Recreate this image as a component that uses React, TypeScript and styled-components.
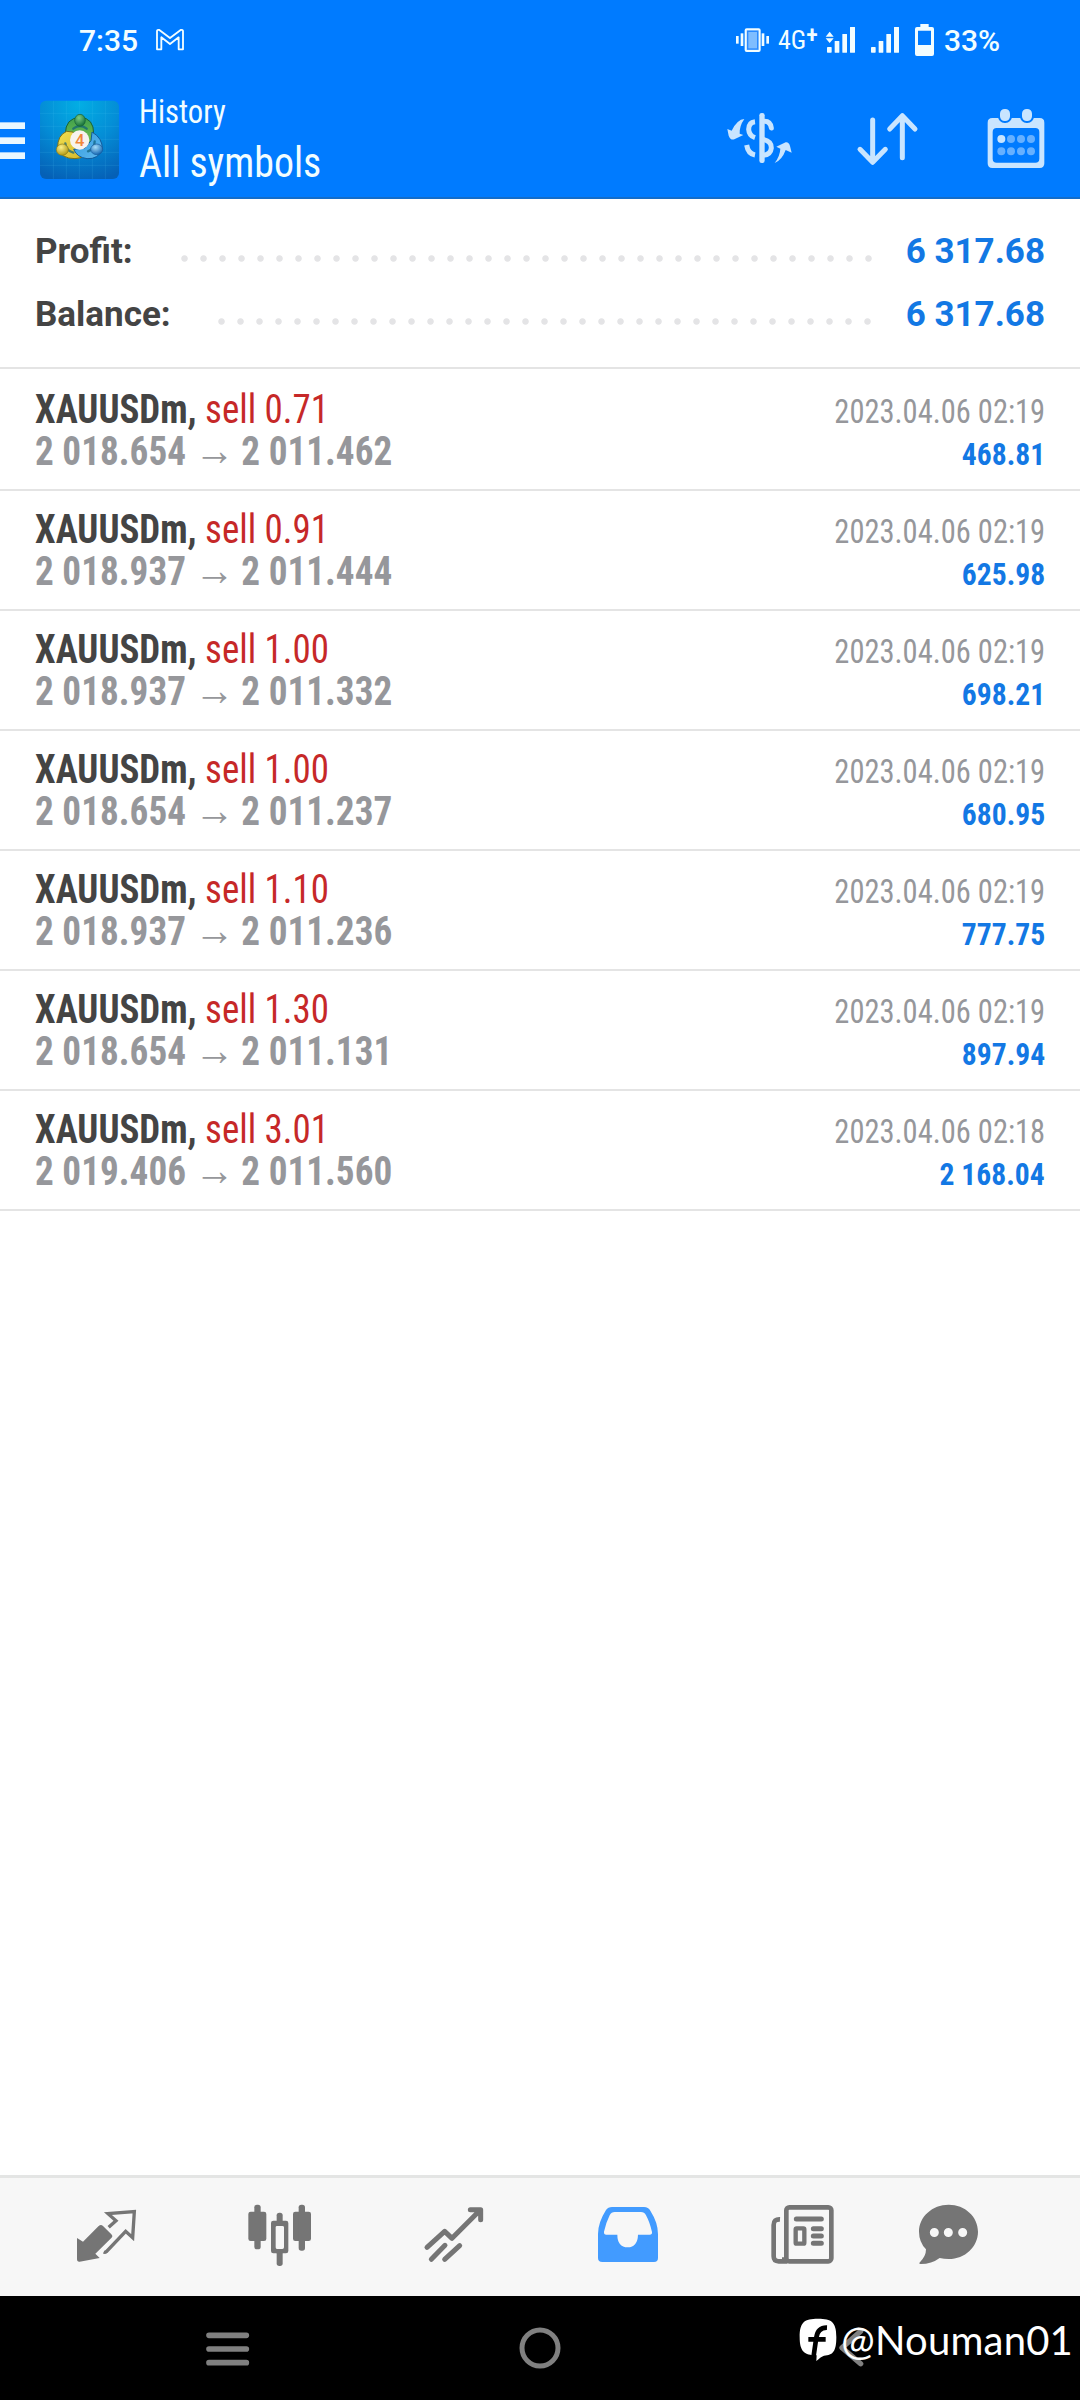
import React from "react";
import styled, { createGlobalStyle } from "styled-components";

const Global = createGlobalStyle`
  * { box-sizing: border-box; }
  html, body { margin: 0; padding: 0; background: #fff; }
  body { font-family: Roboto, "Liberation Sans", sans-serif; }
`;

const condensed = `font-family: "Roboto Condensed", Roboto, sans-serif; font-stretch: 75%;`;

const Screen = styled.div`
  width: 1080px;
  height: 2400px;
  display: flex;
  flex-direction: column;
  background: #fff;
  overflow: hidden;
`;

const StatusBar = styled.div`
  height: 80px;
  flex: none;
  display: flex;
  justify-content: space-between;
  background: #007bff;
  color: #f2fdff;
`;

const StatusGroup = styled.div<{ $left?: number; $right?: number }>`
  display: flex;
  padding-left: ${(p) => p.$left ?? 0}px;
  padding-right: ${(p) => p.$right ?? 0}px;
`;

const StatusText = styled.span<{ $width: number; $inset?: number }>`
  width: ${(p) => p.$width}px;
  padding-left: ${(p) => p.$inset ?? 0}px;
  font-size: 30px;
  font-weight: 500;
  line-height: 81px;
  white-space: nowrap;
`;

const NetworkText = styled(StatusText)`
  ${condensed}
  font-size: 26px;
  font-weight: 400;
`;

const Plus = styled.span`
  font-size: 24px;
  font-weight: 600;
  line-height: 0;
  vertical-align: 6px;
`;

const Glyph = styled.svg`
  display: block;
  flex: none;
`;

const AppBar = styled.header`
  height: 119px;
  flex: none;
  display: flex;
  background: #007bff;
  border-bottom: 2px solid #136dca;
  padding-right: 28px;
`;

const Titles = styled.div`
  flex: 1;
  padding: 12px 0 0 19px;
  color: #f2fdff;
  ${condensed}
`;

const Kicker = styled.div`
  font-size: 33px;
  line-height: 40px;
  transform: scaleX(0.93);
  transform-origin: left;
`;

const Title = styled.div`
  font-size: 43px;
  line-height: 50px;
  margin-top: 5px;
  transform: scaleX(0.927);
  transform-origin: left;
`;

const Actions = styled.div`
  display: flex;
  gap: 56px;
`;

const Summary = styled.section`
  height: 170px;
  flex: none;
  padding: 21px 35px 0;
  border-bottom: 2px solid #e4e4e4;
`;

const SummaryRow = styled.div`
  display: flex;
  height: 63px;
  font-size: 35px;
  line-height: 63px;
  font-weight: 700;
`;

const SummaryLabel = styled.span<{ $width: number }>`
  width: ${(p) => p.$width}px;
  color: #444;
  white-space: nowrap;
`;

const Dots = styled.span<{ $count: number }>`
  width: ${(p) => p.$count * 19}px;
  height: 19px;
  margin-top: 29px;
  background: radial-gradient(circle at 9.5px 9.5px, #e4e4e6 2.8px, transparent 3.7px) 0 0 / 19px 19px repeat-x;
`;

const SummaryValue = styled.span`
  margin-left: auto;
  color: #1378e4;
`;

const List = styled.main`
  flex: 1;
  padding-top: 2px;
`;

const Deal = styled.article`
  height: 120px;
  padding: 18px 35px 0;
  border-bottom: 2px solid #e4e4e4;
  ${condensed}
`;

const Line = styled.div`
  display: flex;
  justify-content: space-between;
  align-items: baseline;
  height: 42px;
  line-height: 42px;
  white-space: pre;
`;

const SymbolName = styled.span`
  font-size: 40px;
  font-weight: 700;
  color: #444;
  transform: scaleX(0.922);
  transform-origin: left;
`;

const Side = styled.span`
  font-weight: 400;
  color: #c62828;
`;

const Prices = styled.span`
  font-size: 40px;
  font-weight: 700;
  color: #96979b;
  transform: scaleX(0.93);
  transform-origin: left;
`;

const Arrow = styled.span`
  font-size: 43px;
  line-height: 0;
  margin-right: -2px;
`;

const Time = styled.span`
  font-size: 33px;
  color: #96979b;
  transform: scaleX(0.924);
  transform-origin: right;
`;

const Result = styled.span`
  font-size: 32px;
  font-weight: 700;
  color: #1378e4;
  transform: scaleX(0.925);
  transform-origin: right;
`;

const TabBar = styled.nav`
  height: 121px;
  flex: none;
  display: grid;
  grid-template-columns: repeat(5, 174px) 118px;
  justify-items: center;
  padding-left: 20px;
  background: #f7f7f7;
  border-top: 3px solid #e4e5e4;
`;

const SystemNav = styled.footer`
  position: relative;
  height: 104px;
  flex: none;
  display: flex;
  align-items: center;
  background: #000;
`;

const Watermark = styled.div`
  position: absolute;
  right: 7px;
  top: 22px;
  display: flex;
  align-items: center;
  gap: 4px;
  color: #fff;
  font-family: Lato, sans-serif;
  font-size: 40px;
  letter-spacing: 0.2px;
  line-height: 44px;
`;

const deals = [
  ["0.71", "2 018.654", "2 011.462", "2023.04.06 02:19", "468.81"],
  ["0.91", "2 018.937", "2 011.444", "2023.04.06 02:19", "625.98"],
  ["1.00", "2 018.937", "2 011.332", "2023.04.06 02:19", "698.21"],
  ["1.00", "2 018.654", "2 011.237", "2023.04.06 02:19", "680.95"],
  ["1.10", "2 018.937", "2 011.236", "2023.04.06 02:19", "777.75"],
  ["1.30", "2 018.654", "2 011.131", "2023.04.06 02:19", "897.94"],
  ["3.01", "2 019.406", "2 011.560", "2023.04.06 02:18", "2 168.04"],
];

const GmailIcon = () => (
  <Glyph width="32" height="80" viewBox="462 0 96 240" fill="none" stroke="#f2fdff" strokeWidth="5.5" strokeLinejoin="round">
    <path d="M471 146V94q0-6 7-4l32 24 32-24q7-2 7 4v54h-13v-36l-26 20-26-20v36h-13z" />
  </Glyph>
);

const VibrateIcon = () => (
  <Glyph width="44" height="80" viewBox="99 0 132 240" fill="#f2fdff">
    <rect x="108" y="108" width="8" height="23" />
    <rect x="122" y="100" width="8" height="38" />
    <rect x="185" y="100" width="8" height="38" />
    <rect x="199" y="108" width="8" height="23" />
    <rect x="137" y="88" width="42" height="65" rx="3" fill="#7fbdff" stroke="#f2fdff" strokeWidth="6" />
    <rect x="143" y="94" width="30" height="53" fill="none" stroke="#2a8aff" strokeWidth="4" />
  </Glyph>
);

const PowerIcons = () => (
  <Glyph width="110" height="80" viewBox="375 0 330 240" fill="#f2fdff">
    <path d="M377 110l12-15 12 15zM377 115h24l-12 14z" />
    <rect x="381" y="141" width="14" height="17" rx="2" />
    <rect x="404" y="123" width="14" height="35" rx="1" />
    <rect x="427" y="102" width="14" height="56" rx="1" />
    <rect x="450" y="81" width="15" height="77" rx="1" />
    <rect x="513" y="141" width="14" height="17" rx="2" />
    <rect x="536" y="123" width="14" height="35" rx="1" />
    <rect x="559" y="102" width="14" height="56" rx="1" />
    <rect x="582" y="81" width="15" height="77" rx="1" />
    <path fillRule="evenodd" d="M661 72h25v9h10q6 0 6 6v75q0 6-6 6h-45q-6 0-6-6V87q0-6 6-6h10zM654 92v43h39V92z" />
  </Glyph>
);

const MenuIcon = () => (
  <Glyph width="40" height="117" viewBox="0 240 120 351" fill="#e9f7ff">
    <rect x="0" y="367" width="75" height="20" />
    <rect x="0" y="412" width="75" height="20" />
    <rect x="0" y="457" width="75" height="20" />
  </Glyph>
);

const AppLogo = () => (
  <Glyph width="80" height="117" viewBox="60 0 240 351">
    <defs>
      <radialGradient id="tile" cx="0.5" cy="0.05" r="1">
        <stop offset="0" stopColor="#02aee4" />
        <stop offset="0.5" stopColor="#048dd6" />
        <stop offset="1" stopColor="#0560b6" />
      </radialGradient>
      <linearGradient id="green" x1="0" y1="0" x2="0" y2="1">
        <stop offset="0" stopColor="#3f9f4c" />
        <stop offset="1" stopColor="#7cc653" />
      </linearGradient>
      <linearGradient id="yellow" x1="0" y1="0" x2="1" y2="1">
        <stop offset="0" stopColor="#f0e050" />
        <stop offset="1" stopColor="#d4b52a" />
      </linearGradient>
      <linearGradient id="blue" x1="0" y1="0" x2="1" y2="1">
        <stop offset="0" stopColor="#2f9be0" />
        <stop offset="1" stopColor="#61b8ec" />
      </linearGradient>
      <radialGradient id="ballGreen" cx="0.4" cy="0.3" r="0.7">
        <stop offset="0" stopColor="#7fce82" />
        <stop offset="1" stopColor="#15703a" />
      </radialGradient>
      <radialGradient id="ballYellow" cx="0.4" cy="0.3" r="0.7">
        <stop offset="0" stopColor="#fbf08a" />
        <stop offset="1" stopColor="#b39a14" />
      </radialGradient>
      <radialGradient id="ballBlue" cx="0.4" cy="0.3" r="0.7">
        <stop offset="0" stopColor="#a5dcf8" />
        <stop offset="1" stopColor="#1769b4" />
      </radialGradient>
    </defs>
    <rect x="60" y="62" width="237" height="235" rx="18" fill="url(#tile)" />
    <path d="M100 62v235M139 62v235M178 62v235M217 62v235M256 62v235M60 100h237M60 139h237M60 178h237M60 217h237M60 256h237" stroke="#5cc8f2" strokeOpacity="0.22" strokeWidth="2" />
    <g strokeWidth="3">
      <path d="M180 112q42 2 41 50l-14 40-28-22-30-14-13-4q0-48 44-50z" fill="url(#green)" stroke="#17613b" />
      <path d="M140 154q-28 12-27 50 10 32 52 32 20 0 34-12l-30-46-10-22z" fill="url(#yellow)" stroke="#77701b" />
      <path d="M216 156q32 18 31 52-12 30-46 28-30-4-40-28l34-4 18-22z" fill="url(#blue)" stroke="#125b9c" />
    </g>
    <path d="M160 146q20-16 40 0M136 190q2 22 24 28M224 184q0 22-20 30" fill="none" stroke="#0d5f7c" strokeOpacity="0.7" strokeWidth="7" strokeLinecap="round" />
    <ellipse cx="180" cy="121" rx="16" ry="18" fill="url(#ballGreen)" stroke="#156137" strokeWidth="2" />
    <ellipse cx="127" cy="209" rx="18" ry="17" fill="url(#ballYellow)" stroke="#8a7a18" strokeWidth="2" />
    <ellipse cx="230" cy="208" rx="18" ry="16" fill="url(#ballBlue)" stroke="#15599b" strokeWidth="2" />
    <circle cx="179" cy="180" r="29" fill="#f7f3ee" />
    <text x="179" y="197" textAnchor="middle" fontFamily="Roboto, sans-serif" fontSize="50" fontWeight="500" fill="#f0873a">4</text>
  </Glyph>
);

const ExchangeIcon = () => (
  <Glyph width="72" height="117" viewBox="72 240 216 351" fill="#c9e5ff">
    <path d="M133 357Q112 358 95 392L82 387L86 407Q92 422 103 418L130 405L119 401Q118 378 133 357z" />
    <path d="M224 489Q246 480 257 450L275 458L270 438Q266 425 257 427L229 440L241 446Q240 468 224 489z" />
    <rect x="178" y="339" width="16" height="150" rx="7" />
    <g fill="none" stroke="#c9e5ff" strokeWidth="15">
      <path d="M165 365Q146 367 146 388Q147 407 165 413" />
      <path d="M140 435Q144 461 165 465" />
      <path d="M194 364Q211 364 214 384" strokeLinecap="round" />
      <path d="M190 418Q215 424 214 444Q212 464 190 466" />
    </g>
  </Glyph>
);

const SortIcon = () => (
  <Glyph width="72" height="117" viewBox="456 240 216 351" fill="none" stroke="#c9e5ff" strokeWidth="15" strokeLinecap="round" strokeLinejoin="round">
    <path d="M518 360V486M480 448l38 39 38-39" />
    <path d="M607 473V348M569 387l38-40 38 40" />
  </Glyph>
);

const CalendarIcon = () => (
  <Glyph width="72" height="117" viewBox="840 240 216 351" fill="#c9e5ff">
    <path fillRule="evenodd" d="M877 354h142q14 0 14 14v122q0 14-14 14H877q-14 0-14-14V368q0-14 14-14zM890 384q-12 0-12 12v80q0 12 12 12h116q12 0 12-12v-80q0-12-12-12z" />
    <rect x="897" y="324" width="36" height="42" rx="17" stroke="#007bff" strokeWidth="6" />
    <rect x="963" y="324" width="36" height="42" rx="17" stroke="#007bff" strokeWidth="6" />
    <circle cx="904" cy="417" r="12" />
    <g fill="#66b0ff">
      <circle cx="933" cy="417" r="12" />
      <circle cx="963" cy="417" r="12" />
      <circle cx="993" cy="417" r="12" />
      <circle cx="904" cy="454" r="12" />
      <circle cx="933" cy="454" r="12" />
      <circle cx="963" cy="454" r="12" />
      <circle cx="993" cy="454" r="12" />
    </g>
  </Glyph>
);

const TradeIcon = () => (
  <Glyph width="72" height="118" viewBox="93 54 216 354" fill="#757575">
    <path d="M111 234l18 11 47-47q7-6 13 0l25 25q6 6 0 11l-48 47 13 13-60 11q-8 1-8-8z" />
    <path d="M206 202l22-20-24-21 79-6-5 78-21-19-58 61q-4 3-8 1" fill="none" stroke="#757575" strokeWidth="10" />
  </Glyph>
);

const CandlesIcon = () => (
  <Glyph width="72" height="118" viewBox="615 54 216 354" fill="#757575">
    <rect x="625" y="155" width="54" height="88" rx="7" />
    <rect x="643" y="134" width="19" height="134" rx="8" />
    <rect x="759" y="155" width="54" height="88" rx="7" />
    <rect x="776" y="134" width="19" height="138" rx="8" />
    <rect x="710" y="158" width="18" height="36" rx="8" />
    <rect x="710" y="272" width="18" height="46" rx="8" />
    <path fillRule="evenodd" d="M700 182h38q7 0 7 7v84q0 7-7 7h-38q-7 0-7-7v-84q0-7 7-7zM711 198q-4 0-4 4v60q0 5 4 5h16q5 0 5-5v-60q0-4-5-4z" />
  </Glyph>
);

const TrendIcon = () => (
  <Glyph width="72" height="118" viewBox="1137 54 216 354" fill="none" stroke="#757575" strokeWidth="15" strokeLinecap="round" strokeLinejoin="round">
    <path d="M1161 262l53-48 22 21 84-84M1291 149h31v30" />
    <path d="M1174 298l41-42M1214 298l45-41" />
  </Glyph>
);

const InboxIcon = () => (
  <Glyph width="72" height="118" viewBox="99 54 216 354" fill="#429bff">
    <path fillRule="evenodd" d="M156 141h96q13 0 19 11 23 36 23 70v72q0 12-12 12H127q-13 0-13-12v-72q0-34 24-72 6-9 18-9zM164 156q-10 0-15 10-11 22-17 49-1 9 7 9h33q0 37 31 38 30-1 31-38h35q8 0 7-8-7-30-18-50-5-10-15-10z" />
  </Glyph>
);

const NewsIcon = () => (
  <Glyph width="72" height="118" viewBox="621 54 216 354" fill="none" stroke="#757575" strokeWidth="14">
    <rect x="679" y="142" width="135" height="162" rx="9" />
    <path d="M660 178q-19-1-19 17v94q0 15 15 15h26" />
    <path d="M670 292v12h12" strokeWidth="8" />
    <path d="M709 177h75M760 206h24M760 228h24M760 250h24" strokeWidth="15" strokeLinecap="round" />
    <rect x="707" y="205" width="26" height="46" rx="3" strokeWidth="13" />
  </Glyph>
);

const ChatIcon = () => (
  <Glyph width="72" height="118" viewBox="1059 54 216 354" fill="#757575">
    <path fillRule="evenodd" d="M1166 134c49 0 88 36 88 81s-39 82-88 82q-14 0-27-3-24 18-57 18-8-1-1-7 17-17 17-37-21-22-21-53c0-45 40-81 89-81zM1123 204a13.500 13.500 0 100 27 13.500 13.500 0 000-27zM1165 204a13.500 13.500 0 100 27 13.500 13.500 0 000-27zM1208 204a13.500 13.500 0 100 27 13.500 13.500 0 000-27z" />
  </Glyph>
);

const NavGlyph = styled(Glyph)<{ $gap: number }>`
  margin-left: ${(p) => p.$gap}px;
`;

const SystemIcons = () => (
  <>
    <NavGlyph $gap={200} width="56" height="104" viewBox="480 408 168 312" fill="none" stroke="#808080" strokeWidth="17" strokeLinecap="round">
      <path d="M507 526h112M507 567h112M507 608h112" />
    </NavGlyph>
    <NavGlyph $gap={256} width="56" height="104" viewBox="1416 408 168 312" fill="none" stroke="#808080" strokeWidth="15">
      <circle cx="1500" cy="564" r="54" />
    </NavGlyph>
    <NavGlyph $gap={256} width="56" height="104" viewBox="792 408 168 312" fill="none" stroke="#808080" strokeWidth="16" strokeLinecap="round" strokeLinejoin="round">
      <path d="M902 514l-56 49 56 48" />
    </NavGlyph>
  </>
);

const FacebookIcon = () => (
  <Glyph width="38" height="44" viewBox="720 484 114 132">
    <path d="M777 486c41 0 55 10 55 55 0 43-10 55-37 56q-9 3-23 16l1-17c-38 0-51-12-51-55 0-45 14-55 55-55z" fill="#fff" />
    <path d="M763 604l9-62q5-30 32-29M748 548h52" fill="none" stroke="#000" strokeWidth="14" />
  </Glyph>
);

export default function App() {
  return (
    <Screen>
      <Global />
      <StatusBar>
        <StatusGroup $left={79}>
          <StatusText $width={75}>7:35</StatusText>
          <GmailIcon />
        </StatusGroup>
        <StatusGroup $right={70}>
          <VibrateIcon />
          <NetworkText $width={48} $inset={1}>4G<Plus>+</Plus></NetworkText>
          <PowerIcons />
          <StatusText $width={75} $inset={9}>33%</StatusText>
        </StatusGroup>
      </StatusBar>
      <AppBar>
        <MenuIcon />
        <AppLogo />
        <Titles>
          <Kicker>History</Kicker>
          <Title>All symbols</Title>
        </Titles>
        <Actions>
          <ExchangeIcon />
          <SortIcon />
          <CalendarIcon />
        </Actions>
      </AppBar>
      <Summary>
        <SummaryRow>
          <SummaryLabel $width={140}>Profit:</SummaryLabel>
          <Dots $count={37} />
          <SummaryValue>6 317.68</SummaryValue>
        </SummaryRow>
        <SummaryRow>
          <SummaryLabel $width={177}>Balance:</SummaryLabel>
          <Dots $count={35} />
          <SummaryValue>6 317.68</SummaryValue>
        </SummaryRow>
      </Summary>
      <List>
        {deals.map(([volume, open, close, time, result], i) => (
          <Deal key={i}>
            <Line>
              <SymbolName>XAUUSDm, <Side>sell {volume}</Side></SymbolName>
              <Time>{time}</Time>
            </Line>
            <Line>
              <Prices>{open} <Arrow>→</Arrow> {close}</Prices>
              <Result>{result}</Result>
            </Line>
          </Deal>
        ))}
      </List>
      <TabBar>
        <TradeIcon />
        <CandlesIcon />
        <TrendIcon />
        <InboxIcon />
        <NewsIcon />
        <ChatIcon />
      </TabBar>
      <SystemNav>
        <SystemIcons />
        <Watermark>
          <FacebookIcon />
          @Nouman01
        </Watermark>
      </SystemNav>
    </Screen>
  );
}
